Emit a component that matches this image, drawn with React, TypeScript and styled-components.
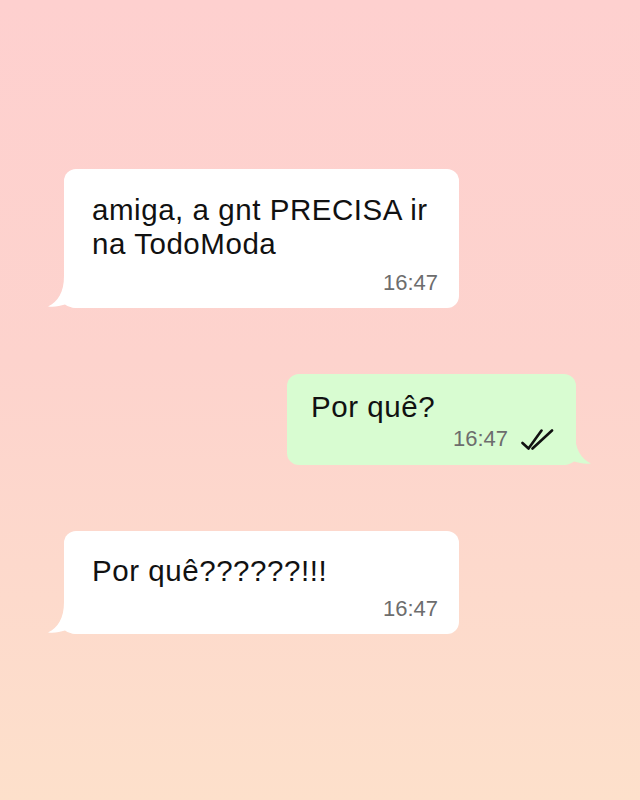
import React from "react";
import styled, { createGlobalStyle } from "styled-components";

const Global = createGlobalStyle`
  html, body { margin: 0; padding: 0; }
  body { font-family: "Liberation Sans", Arial, sans-serif; }
`;

const Screen = styled.div`
  width: 640px;
  height: 800px;
  box-sizing: border-box;
  padding: 169px 64px 0;
  background: linear-gradient(180deg, #fed0cf 0%, #fdd3cd 45%, #fde0cb 100%);
  display: flex;
  flex-direction: column;
  gap: 66px;
`;

const Bubble = styled.div<{ $out?: boolean; $w: number; $pt: number; $pb: number; $pl: number; $pr: number }>`
  position: relative;
  box-sizing: border-box;
  width: ${(p) => p.$w}px;
  align-self: ${(p) => (p.$out ? "flex-end" : "flex-start")};
  background: ${(p) => (p.$out ? "#d8fcd1" : "#ffffff")};
  border-radius: 12px;
  padding: ${(p) => `${p.$pt}px ${p.$pr}px ${p.$pb}px ${p.$pl}px`};
  display: flex;
  flex-direction: column;
`;

const Text = styled.div`
  font-size: 29.5px;
  line-height: 34px;
  color: #111111;
  letter-spacing: 0.55px;
`;

const Meta = styled.div<{ $gap: number }>`
  margin-top: ${(p) => p.$gap}px;
  align-self: flex-end;
  display: flex;
  align-items: center;
  gap: 13px;
`;

const Time = styled.span`
  font-size: 22px;
  line-height: 26px;
  color: #6d6d6d;
`;

const Tail = styled.svg<{ $out?: boolean }>`
  position: absolute;
  bottom: 0;
  width: 32px;
  height: 32px;
  ${(p) => (p.$out ? "right: -15px; transform: scaleX(-1);" : "left: -16px;")}
`;

const TailShape = ({ out, color }: { out?: boolean; color: string }) => (
  <Tail $out={out} viewBox="0 0 32 32">
    <path
      d="M16 0 C16 16 10 26 0 30.5 C6 31.5 12 30 17 28.5 C20 30.5 24 32 32 32 L32 0 Z"
      fill={color}
    />
  </Tail>
);

const Check = () => (
  <svg width="33" height="21" viewBox="0 0 33 21" fill="none">
    <path d="M1.5 14 L7.5 19.5 L20.5 1.5" stroke="#111" strokeWidth="2.6" strokeLinecap="round" strokeLinejoin="round" />
    <path d="M11.5 19.5 L31 1.5" stroke="#111" strokeWidth="2.6" strokeLinecap="round" />
  </svg>
);

export default function App() {
  return (
    <>
      <Global />
      <Screen>
        <Bubble $w={395} $pt={24} $pb={12} $pl={28} $pr={21}>
          <Text>
            amiga, a gnt PRECISA ir
            <br />
            na TodoModa
          </Text>
          <Meta $gap={9}>
            <Time>16:47</Time>
          </Meta>
          <TailShape color="#ffffff" />
        </Bubble>
        <Bubble $out $w={289} $pt={16} $pb={13} $pl={24} $pr={22}>
          <Text>Por quê?</Text>
          <Meta $gap={2}>
            <Time>16:47</Time>
            <Check />
          </Meta>
          <TailShape out color="#d8fcd1" />
        </Bubble>
        <Bubble $w={395} $pt={23} $pb={12} $pl={28} $pr={21}>
          <Text>Por quê??????!!!</Text>
          <Meta $gap={8}>
            <Time>16:47</Time>
          </Meta>
          <TailShape color="#ffffff" />
        </Bubble>
      </Screen>
    </>
  );
}
